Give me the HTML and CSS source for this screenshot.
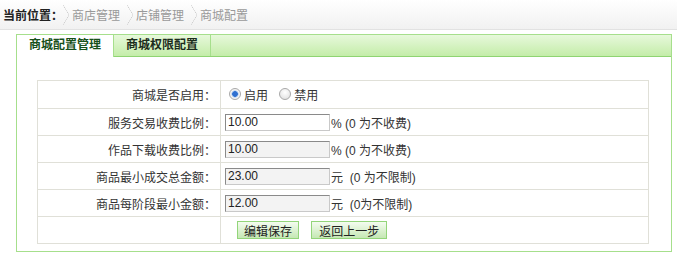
FILE: index.html
```html
<!DOCTYPE html>
<html lang="zh-CN">
<head>
    <meta charset="UTF-8">
    <link rel="stylesheet" href="styles.css">
</head>
<body>
    <div class="crumb">
        <b class="crumb-title">当前位置：</b>
        <span class="sep"></span><a href="#">商店管理</a>
        <span class="sep"></span><a href="#">店铺管理</a>
        <span class="sep"></span><a href="#">商城配置</a>
    </div>

    <div class="panel">
        <div class="tabs">
            <span class="tab active">商城配置管理</span>
            <span class="tab">商城权限配置</span>
        </div>
        <div class="panel-body">
            <table class="form">
                <tr class="first">
                    <td class="label">商城是否启用：</td>
                    <td>
                        <label class="radio"><input type="radio" name="open" checked>启用</label>
                        <label class="radio"><input type="radio" name="open">禁用</label>
                    </td>
                </tr>
                <tr>
                    <td class="label">服务交易收费比例：</td>
                    <td><input class="txt white" type="text" value="10.00"><span class="hint">% (0 为不收费)</span></td>
                </tr>
                <tr>
                    <td class="label">作品下载收费比例：</td>
                    <td><input class="txt" type="text" value="10.00"><span class="hint">% (0 为不收费)</span></td>
                </tr>
                <tr>
                    <td class="label">商品最小成交总金额：</td>
                    <td><input class="txt" type="text" value="23.00"><span class="hint">元&nbsp; (0 为不限制)</span></td>
                </tr>
                <tr>
                    <td class="label">商品每阶段最小金额：</td>
                    <td><input class="txt" type="text" value="12.00"><span class="hint">元&nbsp; (0为不限制)</span></td>
                </tr>
                <tr>
                    <td class="label"></td>
                    <td class="actions">
                        <button class="btn">编辑保存</button>
                        <button class="btn">返回上一步</button>
                    </td>
                </tr>
            </table>
        </div>
    </div>
</body>
</html>
```

FILE: styles.css
```css
/* page colours */
:root {
    --green: #a6df8c;
    --green-dark: #8fd472;
    --line: #e0e0d8;
    --text: #333;
}

* {
    margin: 0;
    padding: 0;
    box-sizing: border-box;
}

body {
    background: #fff;
    color: var(--text);
    font: 12px "Liberation Sans", "Noto Sans CJK SC", sans-serif;
}

/* breadcrumb */
.crumb {
    height: 30px;
    display: flex;
    align-items: center;
    padding-left: 3px;
    background: linear-gradient(#ffffff, #f1f1f1);
    border-bottom: 1px solid #e2e2e2;
}

.crumb-title {
    color: #222;
    margin-right: 0;
}

.crumb a {
    color: #999;
    text-decoration: none;
    margin: 0 7px 0 3px;
}

.sep {
    width: 6px;
    height: 20px;
    background: linear-gradient(to top right, transparent 46%, #cfcfcf 50%, transparent 56%) top / 6px 10px no-repeat,
                linear-gradient(to bottom right, transparent 46%, #cfcfcf 50%, transparent 56%) bottom / 6px 10px no-repeat;
}

/* panel with tabs */
.panel {
    margin: 4px 0 0 16px;
    width: 656px;
    height: 218px;
    border: 1px solid var(--green);
}

.tabs {
    display: flex;
    height: 22px;
    background: linear-gradient(#e7f8db, #c4eda9);
    border-bottom: 1px solid var(--green-dark);
}

.tab {
    width: 97px;
    text-align: center;
    line-height: 21px;
    font-weight: bold;
    color: #1c2c1c;
    border-right: 1px solid var(--green);
}

.tab.active {
    background: #fff;
    color: #17501a;
    height: 22px;
    margin-bottom: -1px;
}

.panel-body {
    padding: 23px 22px 0 20px;
}

/* form table */
.form {
    width: 100%;
    border-collapse: collapse;
}

.form td {
    border: 1px solid var(--line);
    height: 27px;
    vertical-align: middle;
}

.form tr.first td {
    height: 28px;
}

.form td.label {
    width: 183px;
    text-align: right;
    padding-right: 4px;
}

.form td:last-child {
    padding-left: 4px;
}

.radio {
    display: inline-flex;
    align-items: center;
    margin-right: 4px;
}

.radio input {
    appearance: none;
    width: 12px;
    height: 12px;
    margin: 0 3px 0 4px;
    border: 1px solid #a9a9a9;
    border-radius: 50%;
    background: radial-gradient(circle at 50% 35%, #fff, #dcdcdc);
}

.radio input:checked {
    background: radial-gradient(circle, #2f6fd0 0 2.5px, #9cc0ee 3px, #f4f4f4 4px);
}

.txt {
    width: 105px;
    height: 17px;
    padding: 0 2px;
    vertical-align: middle;
    font: 12px "Liberation Sans", sans-serif;
    color: #222;
    background: #f3f3f3;
    border: 1px solid #c9c9c9;
    border-top-color: #8a8a8a;
    border-left-color: #8a8a8a;
}

.txt.white {
    background: #fff;
}

.hint {
    vertical-align: middle;
    margin-left: 1px;
}

.form td.actions {
    padding-left: 16px;
}

.btn {
    height: 18px;
    padding: 0 6px;
    margin-right: 9px;
    font: 12px "Liberation Sans", "Noto Sans CJK SC", sans-serif;
    color: #222;
    border: 1px solid #93d57a;
    background: linear-gradient(#f4fcf0, #c5e8b4);
    cursor: pointer;
}

.btn + .btn {
    padding: 0 7px;
}
```
